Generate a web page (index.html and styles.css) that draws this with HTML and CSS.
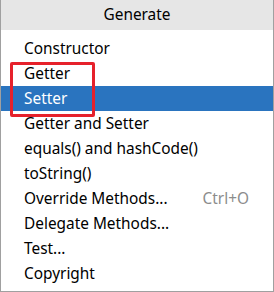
FILE: index.html
```html
<!DOCTYPE html>
<html>
<head>
<meta charset="utf-8">
<link rel="stylesheet" href="styles.css">
</head>
<body>
<div class="popup">
  <div class="header">Generate</div>
  <ul class="list">
    <li class="item">Constructor</li>
    <li class="item">Getter</li>
    <li class="item selected">Setter</li>
    <li class="item">Getter and Setter</li>
    <li class="item">equals() and hashCode()</li>
    <li class="item">toString()</li>
    <li class="item"><span>Override Methods...</span><span class="shortcut">Ctrl+O</span></li>
    <li class="item">Delegate Methods...</li>
    <li class="item">Test...</li>
    <li class="item">Copyright</li>
  </ul>
  <div class="mark"></div>
</div>
</body>
</html>
```
FILE: styles.css
```css
html, body {
  margin: 0;
  padding: 0;
  background: #ffffff;
}
.popup {
  position: relative;
  width: 274px;
  height: 292px;
  box-sizing: border-box;
  border: 1px solid #a0a0a0;
  border-top: none;
  font-family: "Noto Sans", "Open Sans", sans-serif;
  font-size: 15.4px;
  color: #000;
  background: #fff;
}
.header {
  height: 30px;
  line-height: 30px;
  background: #e6e6e6;
  text-align: center;
}
.list {
  list-style: none;
  margin: 0;
  padding: 6px 0 0 0;
}
.item {
  height: 25px;
  line-height: 25px;
  padding-left: 23px;
  padding-right: 24px;
  display: flex;
  justify-content: space-between;
}
.item.selected {
  background: #2a74bf;
  color: #ffffff;
}
.shortcut {
  color: #8c8c8c;
}
.mark {
  position: absolute;
  left: 9px;
  top: 62px;
  width: 85px;
  height: 55px;
  box-sizing: border-box;
  border: 3px solid #e6212b;
  border-radius: 2px;
}
```
